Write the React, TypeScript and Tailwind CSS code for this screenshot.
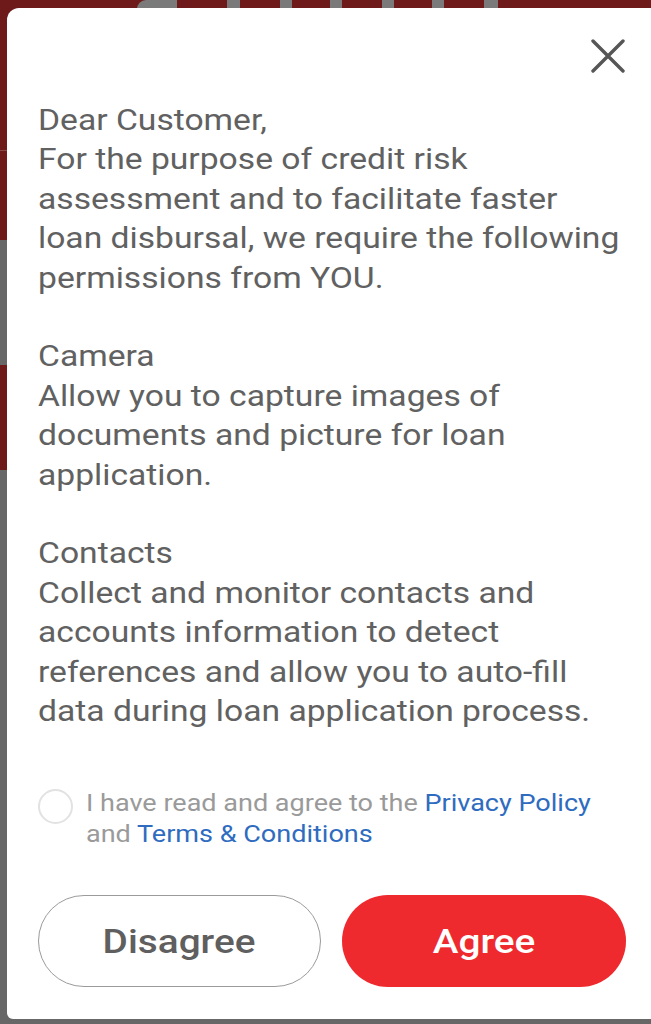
import React from "react";

export default function App() {
  return (
    <div
      className="relative h-[1024px] w-[651px] overflow-hidden bg-[#676767]"
      style={{ fontFamily: "Roboto, 'Noto Sans', sans-serif" }}
    >
      {/* background page */}
      <div className="flex h-full flex-col">
        <div className="relative h-[240px] bg-[#6e1a1a]">
          <div className="flex h-[9px] items-stretch">
            <div className="w-[137px]" />
            <div className="w-[40px] rounded-tl-[20px] bg-[#7a7a7a]" />
            <div className="w-[50px]" />
            <div className="w-[13px] bg-[#7a7a7a]" />
            <div className="w-[40px]" />
            <div className="w-[12px] bg-[#7a7a7a]" />
            <div className="w-[38px]" />
            <div className="w-[12px] bg-[#7a7a7a]" />
            <div className="w-[40px]" />
            <div className="w-[12px] bg-[#7a7a7a]" />
            <div className="w-[38px]" />
            <div className="w-[12px] bg-[#7a7a7a]" />
            <div className="w-[40px]" />
            <div className="w-[14px] bg-[#7a7a7a]" />
          </div>
          <div className="mt-[141px] h-px w-[7px] bg-[#8a4a4a]" />
        </div>
        <div className="h-[125px] bg-[#676767]" />
        <div className="h-[105px] bg-[#6e1a1a]" />
        <div className="flex-1 bg-[#676767]" />
      </div>

      {/* modal */}
      <div className="absolute bottom-[5px] left-[7px] right-0 top-[8px] flex flex-col rounded-bl-[6px] rounded-tl-[12px] bg-white pl-[31px] pr-[24px]">
        <div className="flex h-[93px] justify-end">
          <button className="mr-[2px] mt-[31px] flex h-[34px] w-[34px] items-center justify-center">
            <svg width="34" height="34" viewBox="0 0 34 34">
              <path
                d="M2 2 L32 32 M32 2 L2 32"
                stroke="#565656"
                strokeWidth="3.4"
                strokeLinecap="round"
              />
            </svg>
          </button>
        </div>

        <div className="w-[506px] origin-top-left scale-x-[1.16] text-[29px] leading-[39.4px] text-[#616161]">
          <p>Dear Customer,</p>
          <p>
            For the purpose of credit risk assessment and to facilitate faster
            loan disbursal, we require the following permissions from YOU.
          </p>
          <p className="mt-[39.4px]">Camera</p>
          <p>
            Allow you to capture images of documents and picture for loan
            application.
          </p>
          <p className="mt-[39.4px]">Contacts</p>
          <p>
            Collect and monitor contacts and accounts information to detect
            references and allow you to auto-fill data during loan application
            process.
          </p>
        </div>

        <div className="mt-[57px] flex items-start">
          <div className="mt-[1px] h-[35px] w-[35px] shrink-0 rounded-full border-2 border-[#e2e2e2]" />
          <p className="ml-[13px] w-[472px] origin-top-left scale-x-[1.15] text-[23.5px] leading-[31px] text-[#9a9a9a]">
            I have read and agree to the{" "}
            <span className="text-[#2f6cc0]">Privacy Policy</span> and{" "}
            <span className="text-[#2f6cc0]">Terms &amp; Conditions</span>
          </p>
        </div>

        <div className="mt-[45px] flex gap-[21px]">
          <button className="flex h-[92px] w-[283px] items-center justify-center rounded-full border border-[#9b9b9b] text-[34px] font-medium text-[#5f5f5f]">
            <span className="inline-block scale-x-[1.14]">Disagree</span>
          </button>
          <button className="flex h-[92px] w-[284px] items-center justify-center rounded-full bg-[#ee2a2e] text-[34px] font-medium text-white">
            <span className="inline-block scale-x-[1.14]">Agree</span>
          </button>
        </div>
      </div>
    </div>
  );
}
